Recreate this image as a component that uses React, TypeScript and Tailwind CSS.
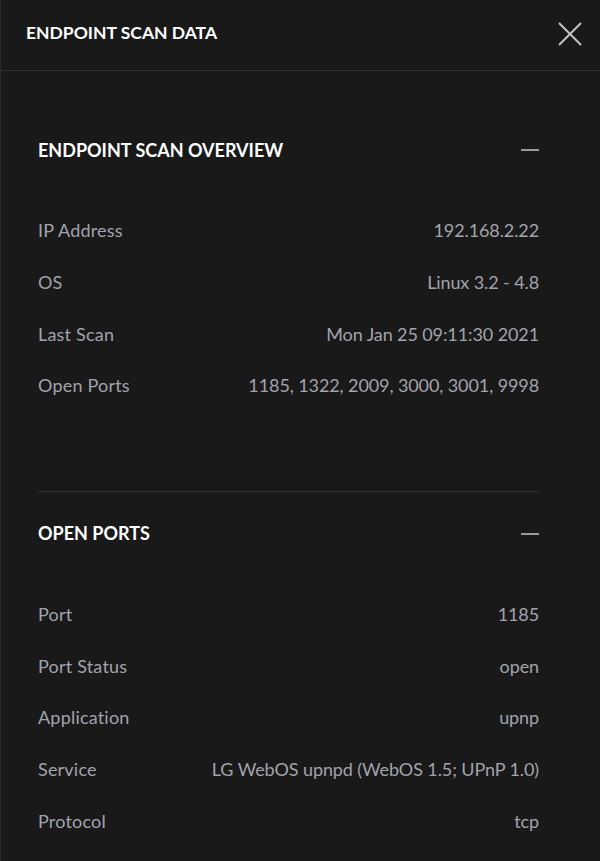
const overview = [
  { label: "IP Address", value: "192.168.2.22" },
  { label: "OS", value: "Linux 3.2 - 4.8" },
  { label: "Last Scan", value: "Mon Jan 25 09:11:30 2021" },
  { label: "Open Ports", value: "1185, 1322, 2009, 3000, 3001, 9998" },
];

const openPorts = [
  { label: "Port", value: "1185" },
  { label: "Port Status", value: "open" },
  { label: "Application", value: "upnp" },
  { label: "Service", value: "LG WebOS upnpd (WebOS 1.5; UPnP 1.0)" },
  { label: "Protocol", value: "tcp" },
];

const Section = ({
  title,
  rows,
  divider,
}: {
  title: string;
  rows: { label: string; value: string }[];
  divider?: boolean;
}) => (
  <section
    className={`ml-[37px] mr-[61px] pt-[18px] pb-[79px] ${divider ? "border-b border-[#333335]" : ""}`}
  >
    <div className="flex h-[48px] items-center justify-between">
      <h2 className="text-[18px] font-bold text-white">{title}</h2>
      <span className="block h-[2px] w-[18px] bg-[#9a9a9e]" />
    </div>
    <dl className="mt-[31px]">
      {rows.map((row) => (
        <div
          key={row.label}
          className="flex h-[51.67px] items-center justify-between text-[18px] text-[#a2a3ab]"
        >
          <dt className="tracking-[0.2px]">{row.label}</dt>
          <dd className="tracking-[-0.1px]">{row.value}</dd>
        </div>
      ))}
    </dl>
  </section>
);

export default function App() {
  return (
    <div
      className="h-[861px] w-[600px] overflow-hidden border-l border-[#2a2a2c] bg-[#19191a]"
      style={{ fontFamily: "Lato, 'Open Sans', sans-serif" }}
    >
      <header className="flex h-[71px] items-center justify-between border-b border-[#30323f] pb-[3px] pl-[25px] pr-[18px]">
        <h1 className="text-[17.5px] font-bold text-white">ENDPOINT SCAN DATA</h1>
        <svg width="24" height="24" viewBox="0 0 24 24" className="text-[#c4c4c6]">
          <path d="M1 1L23 23M23 1L1 23" stroke="currentColor" strokeWidth="2" />
        </svg>
      </header>
      <main className="pt-[37px]">
        <Section title="ENDPOINT SCAN OVERVIEW" rows={overview} divider />
        <Section title="OPEN PORTS" rows={openPorts} />
      </main>
    </div>
  );
}
